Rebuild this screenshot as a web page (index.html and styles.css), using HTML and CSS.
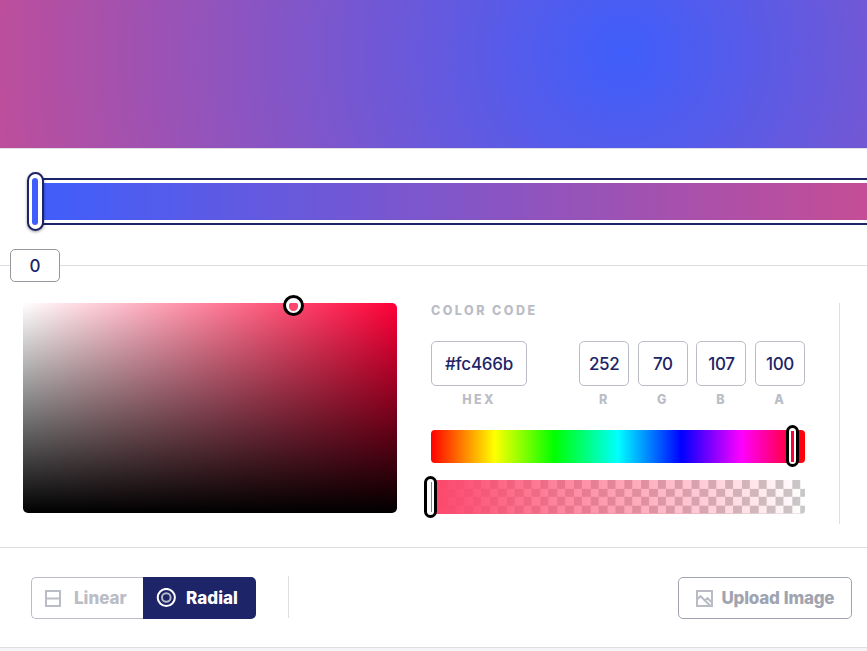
FILE: index.html
```
<!DOCTYPE html>
<html lang="en">
<head>
<meta charset="utf-8">
<title>Gradient editor</title>
<link rel="stylesheet" href="styles.css">
</head>
<body>
<div class="preview"></div>
<section class="stops">
  <div class="track"><div class="track-fill"></div></div>
  <div class="stop-handle"><span></span></div>
</section>
<section class="editor">
  <div class="stop-position">0</div>
  <div class="shade"><span class="shade-handle"><i></i></span></div>
  <div class="codes">
    <h2>COLOR CODE</h2>
    <div class="fields">
      <label class="field hex"><span class="value">#fc466b</span><span class="caption">HEX</span></label>
      <label class="field"><span class="value">252</span><span class="caption">R</span></label>
      <label class="field"><span class="value">70</span><span class="caption">G</span></label>
      <label class="field"><span class="value">107</span><span class="caption">B</span></label>
      <label class="field"><span class="value">100</span><span class="caption">A</span></label>
    </div>
    <div class="bar hue"><span class="bar-handle"></span></div>
    <div class="bar alpha"><span class="bar-handle"></span></div>
  </div>
  <div class="divider"></div>
</section>
<footer class="tools">
  <div class="toggle">
    <button class="option linear">
      <svg width="16" height="17" viewBox="0 0 16 17" fill="none" stroke="currentColor" stroke-width="2"><path d="M1 1h14v15H1zM1 8.500h14"/></svg>
      <span>Linear</span>
    </button>
    <button class="option radial">
      <svg width="20" height="20" viewBox="0 0 20 20" fill="none" stroke-width="2"><circle cx="10.300" cy="9.500" r="8.600" stroke="#fff"/><circle cx="10.300" cy="9.500" r="4.300" stroke="#b7bac6"/></svg>
      <span>Radial</span>
    </button>
  </div>
  <div class="separator"></div>
  <button class="upload">
    <svg width="17" height="17" viewBox="0 0 17 17" fill="none" stroke="#b9bcc4" stroke-width="2"><path d="M1 1h15v15H1zM1 9.500l3.500-3.300L14 15.500M8.500 10.800l3-2.600L16 12.500"/></svg>
    <span>Upload Image</span>
  </button>
</footer>
<div class="below"></div>
</body>
</html>
```
FILE: styles.css
```
* { box-sizing: border-box; }
body {
  margin: 0;
  height: 651px;
  overflow: hidden;
  background: #fff;
  color: #1d2467;
  font-family: Inter, "Liberation Sans", sans-serif;
}
.preview {
  height: 148px;
  background: radial-gradient(circle 945px at 623px 53px, #3f5efb, #fc466b);
}
.stops {
  position: relative;
  height: 118px;
  padding: 30px 0 0 35px;
  border-top: 1px solid #dfdfe5;
  border-bottom: 1px solid #dddee1;
}
.track {
  height: 47px;
  margin-top: -1px;
  border: 2px solid #1d2467;
  border-right: 0;
  padding: 3px 0;
}
.track-fill {
  height: 37px;
  background: linear-gradient(90deg, #3f5efb, #fc466b) 0 0 / 1174px 100%;
}
.stop-handle {
  position: absolute;
  left: 27px;
  top: 23px;
  width: 17px;
  height: 59px;
  padding: 4px 3px;
  border: 2px solid #1d2467;
  border-radius: 9px;
  background: #fff;
  box-shadow: 0 1px 3px rgba(0, 0, 0, .4);
}
.stop-handle span { display: block; width: 6px; height: 47px; border-radius: 3px; background: #3f5efb; }
.editor {
  position: relative;
  display: flex;
  height: 282px;
  padding: 37px 0 0 23px;
  border-bottom: 1px solid #dddee1;
}
.stop-position {
  position: absolute;
  left: 10px;
  top: -17px;
  width: 50px;
  height: 33px;
  border: 1px solid #96979d;
  border-radius: 5px;
  background: #fff;
  font-size: 17px;
  font-weight: 500;
  line-height: 33px;
  text-align: center;
}
.shade {
  position: relative;
  width: 374px;
  height: 210px;
  border-radius: 5px;
  background: linear-gradient(0deg, #000, transparent), linear-gradient(90deg, #fff, #ff0037);
}
.shade-handle {
  position: absolute;
  left: 259.500px;
  top: -8px;
  width: 21px;
  height: 21px;
  border: 3px solid #000;
  border-radius: 50%;
  background: #fff;
}
.shade-handle i { display: block; width: 9px; height: 8px; margin: 5px 0 0 3px; border-radius: 2px 2px 5px 5px; background: #fc466b; }
.codes { width: 374px; margin-left: 34px; }
h2 {
  margin: 0 0 22px;
  height: 16px;
  color: #bbbdc6;
  font-size: 12.500px;
  font-weight: 800;
  line-height: 16px;
  letter-spacing: 2.450px;
}
.fields { display: flex; justify-content: space-between; }
.field { width: 50px; text-align: center; }
.hex { width: 96px; margin-right: 43.500px; }
.value {
  display: block;
  height: 45px;
  border: 1px solid #bbbdc6;
  border-radius: 5px;
  font-size: 17px;
  font-weight: 550;
  line-height: 45px;
  letter-spacing: -.4px;
}
.hex .value { letter-spacing: -.25px; }
.caption { display: block; margin-top: 5px; padding-right: 2px; height: 16px; font-size: 12.500px; font-weight: 800; line-height: 17px; color: #bbbdc6; }
.hex .caption { padding-right: 0; letter-spacing: 2.300px; }
.bar { position: relative; height: 33px; border-radius: 4px; }
.hue { margin-top: 23px; background: linear-gradient(90deg, red, #ff0 17%, lime 33%, cyan 50%, blue 67%, #f0f 83%, red); }
.alpha {
  height: 34px;
  margin-top: 17px;
  background: linear-gradient(90deg, #fc466b, rgba(252, 70, 107, 0)), conic-gradient(#cac8c9 25%, #fff 0 50%, #cac8c9 0 75%, #fff 0) 16.500px 0 / 16.800px 16.800px;
}
.bar-handle {
  position: absolute;
  left: 355px;
  top: -5px;
  width: 13px;
  height: 42px;
  border: 3px solid #000;
  border-radius: 7px;
  background: linear-gradient(#f03, #f03) center / 3px 31px no-repeat #fff;
}
.alpha .bar-handle { left: -7px; top: -4px; background: linear-gradient(#fc466b, #fc466b) 4px center / 1px 30px no-repeat #fff; }
.divider { width: 1px; height: 221px; margin-left: 34px; background: #dddee1; }
.tools { display: flex; align-items: flex-start; height: 100px; padding: 29px 15px 0 31px; border-bottom: 1px solid #dddee1; }
button { font-family: inherit; font-size: 17px; font-weight: 800; padding: 0; }
.toggle { display: flex; }
.option { display: flex; align-items: center; height: 42px; }
.linear { width: 112px; padding-left: 13px; gap: 13px; border: 1px solid #bbbdc6; border-right: 0; border-radius: 5px 0 0 5px; background: #fff; color: #bbbdc6; letter-spacing: 0; }
.radial { width: 113px; padding-left: 13px; gap: 10px; border: 0; border-radius: 0 5px 5px 0; background: #1d2467; color: #fff; letter-spacing: .05px; }
.separator { width: 1px; height: 42px; margin: -1px 0 0 32px; background: #dddee1; }
.upload { display: flex; align-items: center; gap: 8.500px; width: 174px; height: 42px; margin-left: auto; padding-left: 17px; border: 1px solid #a0a4b0; border-radius: 5px; background: #fff; color: #a0a4b0; letter-spacing: -.25px; word-spacing: .8px; white-space: nowrap; }
.below { height: 3px; background: #f4f5f7; }
```
